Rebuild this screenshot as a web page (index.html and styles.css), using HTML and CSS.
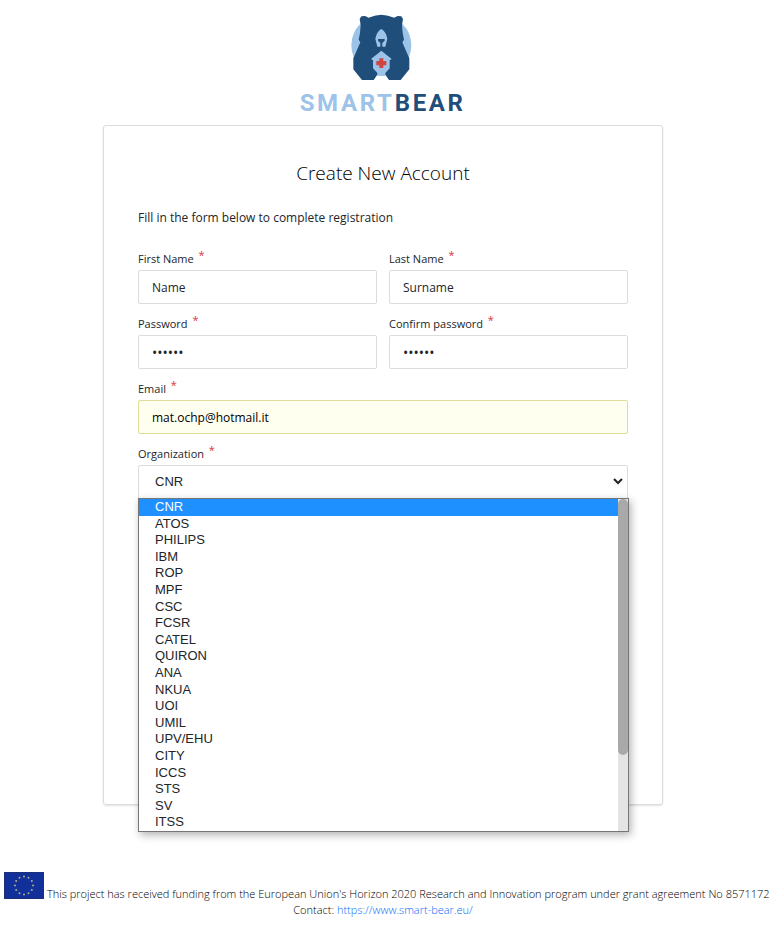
FILE: index.html
```html
<!DOCTYPE html>
<html lang="en">
<head>
<meta charset="utf-8">
<meta name="viewport" content="width=device-width, initial-scale=1">
<title>Create New Account</title>
<link rel="stylesheet" href="styles.css">
</head>
<body>
<header class="brand">
  <svg class="logo" viewBox="3 0 555 345" role="img" aria-label="SmartBear">
    <circle cx="274" cy="121" r="90" fill="#9dc3e8"/>
    <path fill="#1f4e7a" d="M209 42 L214 34 L225 33 L236 38 Q254 30 274 29 Q294 30 312 38 L323 33 L334 34 L339 42 L336 60 L338 84 L342 104 L337 112 L347 135 L358 160 V193 L332 225 H297 L284 206 V212 H264 V206 L251 225 H216 L190 193 V160 L201 135 L211 112 L206 104 L210 84 L212 60 Z"/>
    <path fill="#9dc3e8" d="M274 72 Q288 80 292 101 L286 125 H277 V114 L284 107 V102 H264 V107 L271 114 V125 H262 L256 101 Q260 80 274 72 Z"/>
    <path fill="#9dc3e8" d="M274 137 L305 162 L299 166 V190 L286 204 V213 H262 V204 L249 190 V166 L243 162 Z"/>
    <path fill="#d0453f" d="M268 160 H280 V168 H289 V181 H280 V189 H268 V181 H259 V168 H268 Z"/>
    <text class="wordmark" x="29" y="317"><tspan fill="#9dc3e8">SMART</tspan><tspan fill="#1f4e7a">BEAR</tspan></text>
  </svg>
</header>

<main class="card">
  <h1 class="title">Create New Account</h1>
  <p class="intro">Fill in the form below to complete registration</p>
  <form class="form">
    <div class="field">
      <label for="first">First Name <span class="req">*</span></label>
      <input id="first" type="text" value="Name">
    </div>
    <div class="field">
      <label for="last">Last Name <span class="req">*</span></label>
      <input id="last" type="text" value="Surname">
    </div>
    <div class="field">
      <label for="pass">Password <span class="req">*</span></label>
      <input id="pass" type="password" value="secret">
    </div>
    <div class="field">
      <label for="confirm">Confirm password <span class="req">*</span></label>
      <input id="confirm" type="password" value="secret">
    </div>
    <div class="field wide">
      <label for="email">Email <span class="req">*</span></label>
      <input id="email" class="filled" type="email" value="mat.ochp@hotmail.it">
    </div>
    <div class="field wide">
      <label for="org">Organization <span class="req">*</span></label>
      <div class="picker">
        <select id="org"><option>CNR</option></select>
        <svg class="chevron" viewBox="0 0 10 7" aria-hidden="true"><path d="M1 1 L5 5 L9 1" fill="none" stroke="#222" stroke-width="2"/></svg>
        <div class="menu">
          <ul class="options" role="listbox" aria-label="Organization">
            <li role="option" aria-selected="true" class="selected">CNR</li>
            <li role="option">ATOS</li>
            <li role="option">PHILIPS</li>
            <li role="option">IBM</li>
            <li role="option">ROP</li>
            <li role="option">MPF</li>
            <li role="option">CSC</li>
            <li role="option">FCSR</li>
            <li role="option">CATEL</li>
            <li role="option">QUIRON</li>
            <li role="option">ANA</li>
            <li role="option">NKUA</li>
            <li role="option">UOI</li>
            <li role="option">UMIL</li>
            <li role="option">UPV/EHU</li>
            <li role="option">CITY</li>
            <li role="option">ICCS</li>
            <li role="option">STS</li>
            <li role="option">SV</li>
            <li role="option">ITSS</li>
          </ul>
          <div class="track"><div class="thumb"></div></div>
        </div>
      </div>
    </div>
  </form>
</main>

<footer class="footer">
  <div class="funding">
    <svg class="flag" viewBox="0 0 40 27" role="img" aria-label="European Union flag">
      <rect width="40" height="27" fill="#12309a"/>
      <rect x="0.5" y="0.5" width="39" height="26" fill="none" stroke="#1c2f78"/>
      <g fill="#a9b08c">
        <circle cx="20" cy="4.500" r="1"/><circle cx="24.500" cy="5.700" r="1"/><circle cx="27.800" cy="9" r="1"/>
        <circle cx="29" cy="13.500" r="1"/><circle cx="27.800" cy="18" r="1"/><circle cx="24.500" cy="21.300" r="1"/>
        <circle cx="20" cy="22.500" r="1"/><circle cx="15.500" cy="21.300" r="1"/><circle cx="12.200" cy="18" r="1"/>
        <circle cx="11" cy="13.500" r="1"/><circle cx="12.200" cy="9" r="1"/><circle cx="15.500" cy="5.700" r="1"/>
      </g>
    </svg>
    <span>This project has received funding from the European Union's Horizon 2020 Research and Innovation program under grant agreement No 8571172</span>
  </div>
  <div class="contact">Contact: <a href="https://www.smart-bear.eu/">https://www.smart-bear.eu/</a></div>
</footer>
</body>
</html>
```
FILE: styles.css
```css
* { box-sizing: border-box; }

body {
  margin: 0;
  padding: 5px 9px 16px 0;
  background: #fff;
  color: #212529;
  font: 12px/16px "Open Sans", "Noto Sans", sans-serif;
}

.brand { display: flex; justify-content: center; }
.logo { width: 185px; height: 115px; }
.wordmark {
  font: 700 72px Roboto, sans-serif;
  letter-spacing: 8px;
}

.card {
  max-width: 560px;
  min-height: 680px;
  margin: 5px auto 0;
  padding: 31px 34px;
  border: 1px solid #dcdcdc;
  border-radius: 3px;
  box-shadow: 0 1px 2px rgba(0, 0, 0, 0.12);
}

.title {
  margin: 0;
  color: #000;
  text-align: center;
  font-size: 19px;
  line-height: 32px;
  font-weight: 300;
}

.intro { margin: 21px 0 25px; font-size: 12px; line-height: 16px; }

.form {
  display: grid;
  grid-template-columns: 1fr 1fr;
  gap: 12px;
}
.wide { grid-column: 1 / -1; }

.field label {
  display: block;
  font-size: 11px;
  line-height: 16px;
  margin-bottom: 3px;
}
.req {
  position: relative;
  top: -4px;
  margin-left: 2px;
  color: #dc3545;
}

.field input,
.field select {
  display: block;
  width: 100%;
  height: 34px;
  padding: 0 13px;
  border: 1px solid #dcdcdc;
  border-radius: 2px;
  background: #fff;
  color: #212529;
  font: 12px "Open Sans", "Noto Sans", sans-serif;
}
.field input[type="password"] { font-size: 14px; }
.field .filled {
  border-color: #dedc98;
  background: #fffff0;
  color: #000;
}
.field select {
  appearance: none;
  padding: 0 16px 2px;
  font: 13px "Liberation Sans", sans-serif;
}

.picker { position: relative; }
.chevron {
  position: absolute;
  top: 13px;
  right: 5px;
  width: 10px;
  height: 7px;
}

.menu {
  position: absolute;
  top: 33px;
  left: 0;
  right: -1px;
  display: flex;
  height: 334px;
  border: 1px solid #767676;
  background: #fff;
  box-shadow: 2px 3px 8px rgba(0, 0, 0, 0.3);
  font: 13px/16px "Liberation Sans", sans-serif;
}
.options {
  flex: 1;
  display: grid;
  grid-auto-rows: 1fr;
  margin: 0;
  padding: 0;
  list-style: none;
}
.options li { padding-left: 16px; }
.options .selected { background: #1e90ff; color: #fff; }
.track { width: 10px; background: #e4e4e4; }
.thumb { height: 77%; border-radius: 5px; background: #a9a9a9; }

.footer {
  margin-top: 67px;
  color: #000;
  font-size: 11px;
  font-weight: 300;
}
.funding {
  display: flex;
  align-items: flex-end;
  gap: 3px;
  padding-left: 4px;
  white-space: nowrap;
}
.flag { flex: none; width: 40px; height: 27px; margin-bottom: 3px; }
.contact { text-align: center; }
.contact a { color: #0a6cf5; text-decoration: none; }
```
